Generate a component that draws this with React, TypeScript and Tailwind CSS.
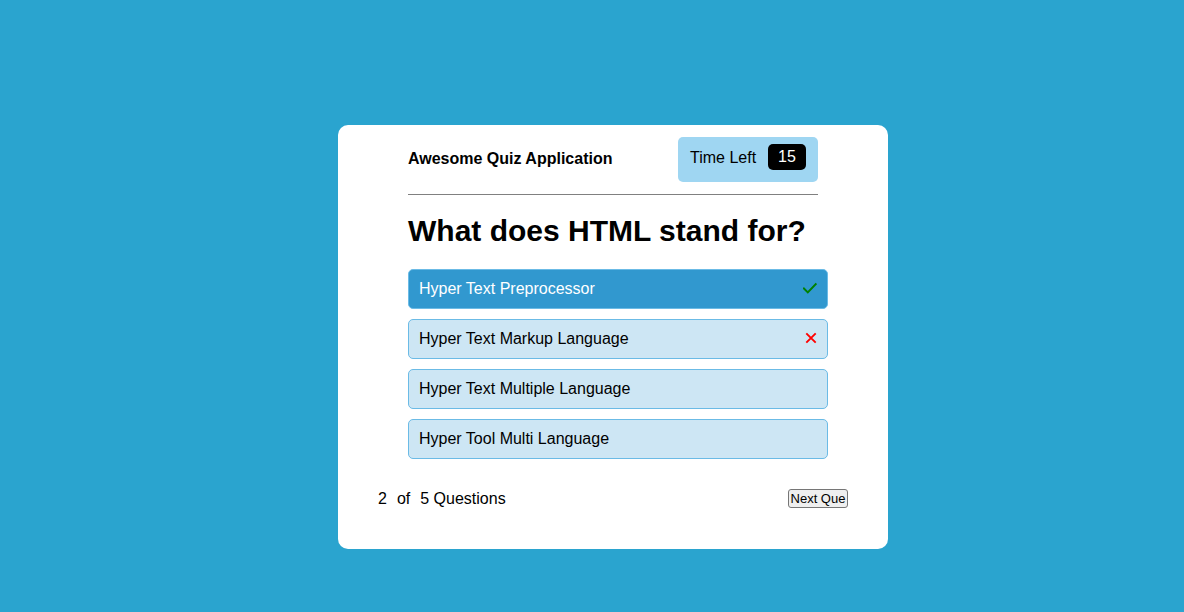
import { useState } from "react";

type Mark = "right" | "wrong" | null;

const options: { text: string; mark: Mark }[] = [
  { text: "Hyper Text Preprocessor", mark: "right" },
  { text: "Hyper Text Markup Language", mark: "wrong" },
  { text: "Hyper Text Multiple Language", mark: null },
  { text: "Hyper Tool Multi Language", mark: null },
];

function CheckIcon() {
  return (
    <svg viewBox="0 0 14 16" className="h-4 w-3.5 text-[#008000]" fill="none" stroke="currentColor" strokeWidth="2" role="img" aria-label="Correct">
      <path d="M0.2 6.8 L4.8 11.4 L13.4 2.4" />
    </svg>
  );
}

function CrossIcon() {
  return (
    <svg viewBox="0 0 12 16" className="h-4 w-3 text-[#ff0000]" fill="none" stroke="currentColor" strokeWidth="1.9" role="img" aria-label="Incorrect">
      <path d="M1.3 2.3 L10.7 11.7 M10.7 2.3 L1.3 11.7" />
    </svg>
  );
}

function Option({ text, mark, selected, onSelect }: { text: string; mark: Mark; selected: boolean; onSelect: () => void }) {
  return (
    <button
      type="button"
      aria-pressed={selected}
      onClick={onSelect}
      className={
        selected
          ? "flex h-10 w-full items-center justify-between rounded-[5px] border border-[#6bbbe6] bg-[#3198cf] px-2.5 text-left text-white"
          : "flex h-10 w-full items-center justify-between rounded-[5px] border border-[#6bbbe6] bg-[#cde6f4] px-2.5 text-left text-black"
      }
    >
      <span>{text}</span>
      {mark === "right" && <CheckIcon />}
      {mark === "wrong" && <CrossIcon />}
    </button>
  );
}

export default function App() {
  const [selected, setSelected] = useState(0);

  return (
    <div className="flex min-h-screen items-center justify-center bg-[#2aa4cf] pt-[62px] pl-[42px] font-['Liberation_Sans',Arial,sans-serif] text-base text-black">
      <main className="w-full max-w-[550px] rounded-[10px] bg-white pt-3 pb-10">
        <header className="mx-[70px] flex items-start justify-between border-b border-[#808080] pb-3">
          <div className="pt-2.5 font-bold">Awesome Quiz Application</div>
          <div className="flex h-[45px] w-[140px] items-start justify-between rounded-[5px] bg-[#9fd6f2] px-3 pt-[7px]">
            <span className="leading-7">Time Left</span>
            <span className="h-[26px] w-[38px] rounded-[5px] bg-black text-center leading-[26px] text-white">15</span>
          </div>
        </header>
        <section className="ml-[70px] mr-[60px] pt-[18px]">
          <h1 className="text-[30px] leading-9 font-bold">What does HTML stand for?</h1>
          <div className="mt-5 flex flex-col gap-2.5">
            {options.map((option, i) => (
              <Option key={option.text} text={option.text} mark={option.mark} selected={selected === i} onSelect={() => setSelected(i)} />
            ))}
          </div>
        </section>
        <footer className="mx-10 mt-[30px] flex items-start justify-between">
          <p className="flex leading-5">
            <span className="mr-2.5">2</span>
            <span className="mr-2.5">of</span>
            <span>5 Questions</span>
          </p>
          <button type="button" className="h-[19px] w-[60px] rounded-[3px] border border-[#767676] bg-[#efefef] text-center text-[13px] leading-4 whitespace-nowrap">
            Next Que
          </button>
        </footer>
      </main>
    </div>
  );
}
